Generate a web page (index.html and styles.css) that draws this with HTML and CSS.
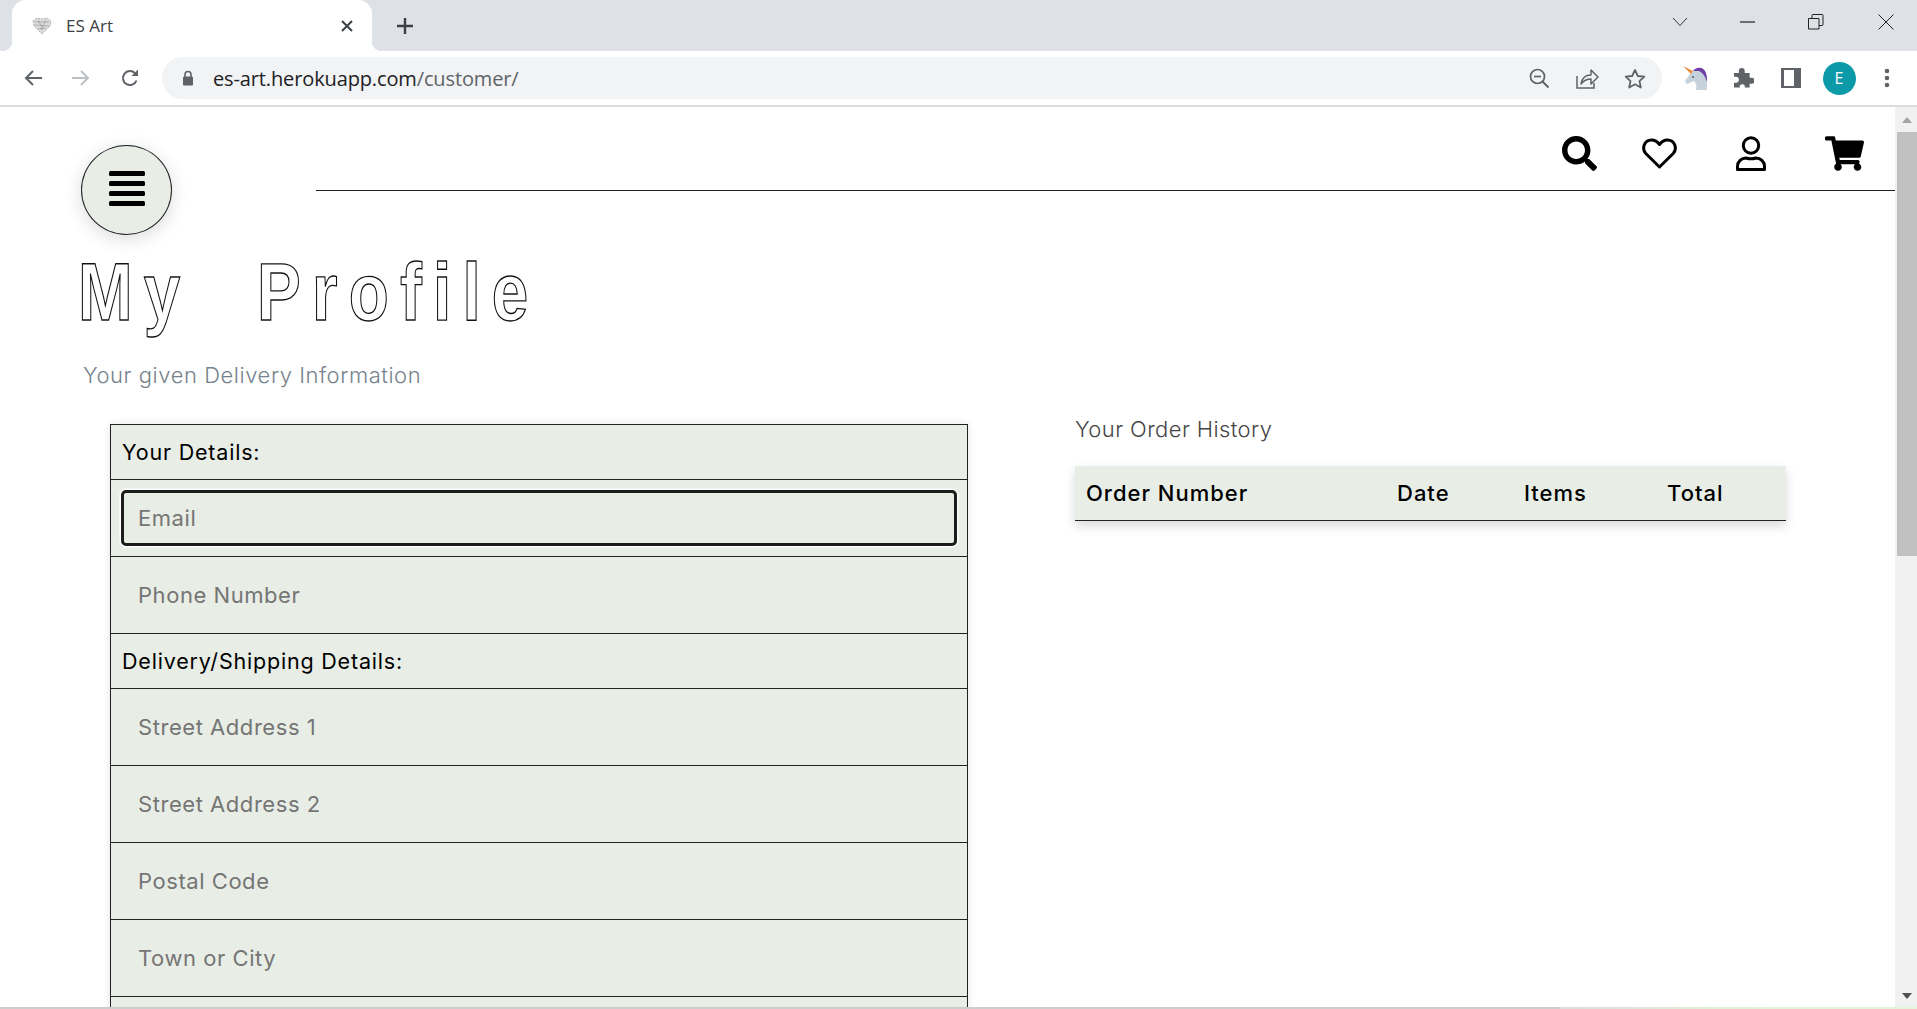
FILE: index.html
```html
<!DOCTYPE html>
<html lang="en">
<head>
    <meta charset="UTF-8">
    <meta name="viewport" content="width=device-width, initial-scale=1.0">
    <title>ES Art</title>
    <link rel="stylesheet" href="styles.css">
</head>
<body>

    <div class="tabstrip">
        <div class="tab">
            <svg class="favicon" width="20" height="18" viewBox="0 0 20 18"><path d="M1 4l4-3 5 1 5-1 4 3-1 5-8 8-8-8z" fill="#dcdcdc" stroke="#a5a5a5" stroke-width=".8" stroke-dasharray="2 1"/><path d="M3 5l14 0M3 8l14 1M6 12l8-1M6 3l5 9M14 3l-5 10" stroke="#999" stroke-width=".7" fill="none"/></svg>
            <span class="tab-title">ES Art</span>
            <svg class="tab-close" width="12" height="12" viewBox="0 0 12 12"><path d="M1 1l10 10M11 1L1 11" stroke="#3c4043" stroke-width="2"/></svg>
        </div>
        <svg class="new-tab" width="18" height="18" viewBox="0 0 18 18"><path d="M9 1v16M1 9h16" stroke="#3c4043" stroke-width="2.4"/></svg>
        <div class="window-controls">
            <svg width="16" height="10" viewBox="0 0 16 10"><path d="M1 1l7 7.500L15 1" stroke="#333" fill="none"/></svg>
            <svg width="16" height="2" viewBox="0 0 16 2"><path d="M0 1h15" stroke="#222" stroke-width="1.200"/></svg>
            <svg width="16" height="16" viewBox="0 0 16 16"><path d="M.5 4.500h10.500v10.500H.5zM4 4.500V1.500a1 1 0 0 1 1-1h9a1 1 0 0 1 1 1v9a1 1 0 0 1-1 1h-3" fill="none" stroke="#222"/></svg>
            <svg class="window-close" width="16" height="16" viewBox="0 0 16 16"><path d="M.5.500l15 15M15.500.500l-15 15" stroke="#222"/></svg>
        </div>
    </div>

    <div class="toolbar">
        <svg class="nav-icon" width="20" height="20" viewBox="0 0 20 20"><path d="M19 10H3M10 3l-7 7 7 7" fill="none" stroke="#5f6368" stroke-width="2"/></svg>
        <svg class="nav-icon" width="20" height="20" viewBox="0 0 20 20"><path d="M1 10h16M10 3l7 7-7 7" fill="none" stroke="#bdc1c6" stroke-width="2"/></svg>
        <svg class="nav-icon" width="20" height="20" viewBox="0 0 20 20"><path d="M16.500 12.500A7 7 0 1 1 15 5.200" fill="none" stroke="#5f6368" stroke-width="2"/><path d="M18 1.500V8h-6.500z" fill="#5f6368"/></svg>
        <div class="omnibox">
            <svg class="lock" width="12" height="16" viewBox="0 0 12 16"><path d="M3 7V4.500a3 3 0 0 1 6 0V7" fill="none" stroke="#5f6368" stroke-width="1.600"/><rect x="1" y="6.500" width="10" height="9" rx="1.200" fill="#5f6368"/></svg>
            <span class="url">es-art.herokuapp.com<span class="url-path">/customer/</span></span>
            <div class="omnibox-actions">
                <svg width="21" height="21" viewBox="0 0 21 21"><circle cx="8.500" cy="8.500" r="7" fill="none" stroke="#5f6368" stroke-width="1.700"/><path d="M13.500 13.500l6 6" stroke="#5f6368" stroke-width="2"/><path d="M5 8.500h7" stroke="#5f6368" stroke-width="1.700"/></svg>
                <svg width="23" height="21" viewBox="0 0 23 21"><path d="M1 8v12h17v-5" fill="none" stroke="#5f6368" stroke-width="1.500"/><path d="M5 16c1-6 5-9 10-9V2l7 7-7 7v-5c-4 0-7 1-10 5z" fill="none" stroke="#5f6368" stroke-width="1.500" stroke-linejoin="round"/></svg>
                <svg width="22" height="21" viewBox="0 0 22 21"><path d="M11 2l2.800 6 6.500.7-4.800 4.400 1.300 6.400L11 16.300 5.200 19.500l1.300-6.400L1.700 8.700 8.200 8z" fill="none" stroke="#5f6368" stroke-width="1.800" stroke-linejoin="round"/></svg>
            </div>
        </div>
        <div class="toolbar-actions">
            <svg width="26" height="26" viewBox="0 0 26 26"><path d="M9 8C12 4 20 3 23 8c2 4 2 12 2 17H14c1-4 0-7-2-9l-7 3-2-3z" fill="#c5d2dc"/><path d="M11 6c4-5 11-4 13 2 1 3 1 6 1 9-2-6-4-9-8-11z" fill="#6f3fa8"/><path d="M1 1l10 5-2 3z" fill="#ef8a3a"/><circle cx="11" cy="12" r="1" fill="#55606a"/></svg>
            <svg width="22" height="22" viewBox="0 0 22 22"><path d="M2 6h5V4a3 3 0 0 1 6 0v2h5v5h2a3 3 0 0 1 0 6h-2v4h-5v-2a3 3 0 0 0-5 0v2H2v-5h2a3 3 0 0 0 0-6H2z" fill="#5f6368" transform="scale(.98)"/></svg>
            <svg width="22" height="22" viewBox="0 0 22 22"><rect x="1" y="1" width="20" height="20" fill="#5f6368"/><rect x="4" y="3" width="10" height="16" fill="#fff"/></svg>
            <span class="avatar">E</span>
            <svg width="6" height="20" viewBox="0 0 6 20"><circle cx="3" cy="3" r="2.300" fill="#5f6368"/><circle cx="3" cy="10" r="2.300" fill="#5f6368"/><circle cx="3" cy="17" r="2.300" fill="#5f6368"/></svg>
        </div>
    </div>

    <div class="page">
        <div class="content">
            <header class="site-header">
                <button class="menu-btn" type="button">
                    <svg width="36" height="36" viewBox="0 0 36 36"><rect y="0" width="36" height="5" rx="1.500"/><rect y="10" width="36" height="5" rx="1.500"/><rect y="20" width="36" height="5" rx="1.500"/><rect y="30" width="36" height="5" rx="1.500"/></svg>
                </button>
                <div class="header-icons">
                    <svg class="icon-search" width="35" height="35" viewBox="0 0 512 512"><path d="M505 442.700L405.300 343c-4.500-4.500-10.600-7-17-7H372c27.600-35.300 44-79.700 44-128C416 93.100 322.900 0 208 0S0 93.100 0 208s93.100 208 208 208c48.300 0 92.700-16.400 128-44v16.300c0 6.400 2.500 12.500 7 17l99.700 99.700c9.400 9.400 24.600 9.400 33.900 0l28.300-28.300c9.400-9.400 9.400-24.600.1-34zM208 336c-70.700 0-128-57.200-128-128 0-70.700 57.200-128 128-128 70.700 0 128 57.200 128 128 0 70.700-57.200 128-128 128z"/></svg>
                    <svg class="icon-heart" width="35" height="31" viewBox="0 0 35 31"><path d="M17.500 29L3.800 15.500C-.5 11 2 2 9.500 2c3.500 0 6 1.800 8 4.500 2-2.700 4.500-4.500 8-4.500 7.500 0 10 9 5.700 13.500z" fill="none" stroke="#000" stroke-width="3" stroke-linejoin="round"/></svg>
                    <svg class="icon-user" width="30" height="35" viewBox="0 0 30 35"><circle cx="15" cy="9.500" r="7.700" fill="none" stroke="#000" stroke-width="3"/><path d="M1.500 33.500v-3c0-5 4-8.500 8.500-8.500 3 1 7 1 10 0 4.500 0 8.500 3.500 8.500 8.500v3z" fill="none" stroke="#000" stroke-width="3" stroke-linejoin="round"/></svg>
                    <svg class="icon-cart" width="39" height="35" viewBox="0 0 576 512"><path d="M528.120 301.319l47.273-208C578.806 78.301 567.391 64 551.990 64H159.208l-9.166-44.810C147.758 8.021 137.930 0 126.529 0H24C10.745 0 0 10.745 0 24v16c0 13.255 10.745 24 24 24h69.883l70.248 343.435C147.325 417.100 136 435.222 136 456c0 30.928 25.072 56 56 56s56-25.072 56-56c0-15.674-6.447-29.835-16.824-40h209.647C430.447 426.165 424 440.326 424 456c0 30.928 25.072 56 56 56s56-25.072 56-56c0-22.172-12.888-41.332-31.579-50.405l5.517-24.276c3.413-15.018-8.002-29.319-23.403-29.319H218.117l-6.545-32h293.145c11.206 0 20.920-7.754 23.403-18.681z"/></svg>
                </div>
            </header>

            <h1 class="page-title"><span class="title-word">My</span><span class="title-word">Profile</span></h1>
            <p class="intro">Your given Delivery Information</p>

            <div class="columns">
                <form class="details-form">
                    <div class="form-heading">Your Details:</div>
                    <div class="form-row"><input class="field field-focus" type="text" placeholder="Email"></div>
                    <div class="form-row"><input class="field" type="text" placeholder="Phone Number"></div>
                    <div class="form-heading">Delivery/Shipping Details:</div>
                    <div class="form-row"><input class="field" type="text" placeholder="Street Address 1"></div>
                    <div class="form-row"><input class="field" type="text" placeholder="Street Address 2"></div>
                    <div class="form-row"><input class="field" type="text" placeholder="Postal Code"></div>
                    <div class="form-row"><input class="field" type="text" placeholder="Town or City"></div>
                    <div class="form-row"><input class="field" type="text" placeholder="County"></div>
                </form>

                <section class="orders">
                    <p class="orders-title">Your Order History</p>
                    <table class="orders-table">
                        <thead>
                            <tr>
                                <th class="col-number">Order Number</th>
                                <th class="col-date">Date</th>
                                <th class="col-items">Items</th>
                                <th class="col-total">Total</th>
                            </tr>
                        </thead>
                    </table>
                </section>
            </div>
        </div>

        <div class="scrollbar">
            <span class="arrow-up"></span>
            <span class="thumb"></span>
            <span class="arrow-down"></span>
        </div>
    </div>

    <div class="window-edge"></div>

</body>
</html>
```

FILE: styles.css
```css
html, body {
    height: 100%;
}

body {
    margin: 0;
    display: flex;
    flex-direction: column;
    overflow: hidden;
    background-color: white;
    font-family: Inter, "Open Sans", sans-serif;
}

/* browser chrome */
.tabstrip {
    height: 51px;
    flex: none;
    display: flex;
    align-items: center;
    background-color: #dee1e6;
}

.tab {
    position: relative;
    width: 360px;
    height: 51px;
    margin-left: 12px;
    padding: 0 19px 0 20px;
    box-sizing: border-box;
    display: flex;
    align-items: center;
    background-color: white;
    border-radius: 14px 14px 0 0;
}

.tab::before,
.tab::after {
    content: "";
    position: absolute;
    bottom: 0;
    width: 10px;
    height: 10px;
}

.tab::before {
    left: -10px;
    background: radial-gradient(circle at 0 0, transparent 10px, white 10.500px);
}

.tab::after {
    right: -10px;
    background: radial-gradient(circle at 100% 0, transparent 10px, white 10.500px);
}

.favicon {
    flex: none;
}

.tab-title {
    margin-left: 14px;
    flex: 1;
    font-family: "Open Sans", sans-serif;
    font-size: 17px;
    color: #3c4043;
}

.new-tab {
    margin-left: 24px;
}

.window-controls {
    margin-left: auto;
    padding-right: 23px;
    padding-bottom: 8px;
    display: flex;
    align-items: center;
    gap: 52px;
}

.window-close {
    margin-left: 2px;
}

.toolbar {
    height: 56px;
    flex: none;
    padding-left: 23px;
    box-sizing: border-box;
    display: flex;
    align-items: center;
    background-color: white;
    border-bottom: 2px solid #dcdcdc;
}

.nav-icon {
    margin-right: 28px;
}

.nav-icon:nth-child(2) {
    margin-right: 29px;
}

.nav-icon:nth-child(3) {
    margin-right: 22px;
}

.omnibox {
    width: 1500px;
    height: 42px;
    flex: none;
    padding: 0 3px 0 20px;
    box-sizing: border-box;
    display: flex;
    align-items: center;
    background-color: #f1f3f4;
    border-radius: 21px;
}

.url {
    margin-left: 19px;
    flex: 1;
    font-family: "Open Sans", sans-serif;
    font-size: 20px;
    letter-spacing: -0.13px;
    color: #202124;
}

.url-path {
    color: #5f6368;
}

.omnibox-actions {
    display: grid;
    grid-template-columns: repeat(3, 48px);
    justify-items: center;
    align-items: center;
}

.toolbar-actions {
    margin-left: 9px;
    display: grid;
    grid-template-columns: repeat(5, 48px);
    justify-items: center;
    align-items: center;
}

.avatar {
    width: 33px;
    height: 33px;
    border-radius: 50%;
    background-color: #0d9aa8;
    color: white;
    font-family: "Open Sans", sans-serif;
    font-size: 16px;
    line-height: 33px;
    text-align: center;
}

/* page */
.page {
    flex: 1;
    min-height: 0;
    display: flex;
}

.content {
    flex: 1;
    min-width: 0;
    overflow: hidden;
}

.site-header {
    display: flex;
    align-items: flex-start;
    padding-left: 81px;
}

.menu-btn {
    width: 91px;
    height: 90px;
    margin-top: 38px;
    padding: 0 0 2px;
    flex: none;
    display: flex;
    align-items: center;
    justify-content: center;
    background-color: #e8ede6;
    border: 1px solid #222;
    border-radius: 50%;
    box-shadow: 0 4px 18px rgba(0, 0, 0, 0.14);
}

.header-icons {
    height: 84px;
    flex: 1;
    margin-left: 144px;
    padding-top: 29px;
    box-sizing: border-box;
    display: flex;
    align-items: flex-start;
    border-bottom: 1px solid #222;
}

.icon-search {
    margin-left: auto;
}

.icon-heart {
    margin: 2px 0 0 45px;
}

.icon-user {
    margin-left: 59px;
}

.icon-cart {
    margin: 0 31px 0 59px;
}

.page-title {
    margin: 21px 0 0 78px;
    height: 75px;
    display: flex;
    font-family: "Liberation Sans", sans-serif;
    font-size: 82px;
    font-weight: 700;
    line-height: 72px;
    color: white;
    -webkit-text-stroke: 1.300px #111;
}

.title-word {
    display: inline-block;
    width: 179px;
    transform: scaleX(0.8);
    transform-origin: left center;
    letter-spacing: 14px;
}

.intro {
    margin: 31px 0 0 83px;
    font-size: 22px;
    font-weight: 300;
    letter-spacing: 0.55px;
    color: #75828c;
}

.columns {
    display: flex;
    align-items: flex-start;
    margin-top: 36px;
    padding-left: 110px;
}

.details-form {
    width: 858px;
    flex: none;
    box-sizing: border-box;
    background-color: #e8ede6;
    border: 1px solid #222;
    box-shadow: 0 0 8px rgba(0, 0, 0, 0.1);
}

.form-heading {
    height: 55px;
    padding-left: 11px;
    box-sizing: border-box;
    display: flex;
    align-items: center;
    font-size: 21.500px;
    color: black;
    letter-spacing: 0.8px;
    border-bottom: 1px solid #222;
}

.form-row {
    height: 77px;
    padding: 10px;
    box-sizing: border-box;
    display: flex;
    align-items: center;
    border-bottom: 1px solid #222;
}

.field {
    width: 100%;
    height: 56px;
    padding: 0 17px;
    box-sizing: border-box;
    background-color: transparent;
    border: none;
    font-family: inherit;
    font-size: 22px;
    letter-spacing: 0.55px;
}

.field::placeholder {
    color: #757575;
    opacity: 1;
}

.field-focus {
    border: 3px solid #1c1c1c;
    border-radius: 5px;
    padding-left: 14px;
    box-shadow: 0 0 0 1.500px white;
}

.orders {
    width: 711px;
    margin: -8px 0 0 107px;
    flex: none;
}

.orders-title {
    margin: 0 0 24px;
    font-size: 22px;
    font-weight: 300;
    letter-spacing: 0.4px;
    color: #444;
}

.orders-table {
    width: 100%;
    table-layout: fixed;
    border-collapse: collapse;
    background-color: #e8ede6;
    border-bottom: 1px solid #222;
    box-shadow: 0 5px 10px rgba(0, 0, 0, 0.15);
}

.orders-table th {
    height: 54px;
    padding: 0;
    font-size: 22px;
    font-weight: 500;
    letter-spacing: 1px;
    text-align: left;
    color: black;
}

.orders-table .col-number {
    width: 311px;
    padding-left: 11px;
}

.col-date {
    width: 127px;
}

.col-items {
    width: 143px;
}

.scrollbar {
    width: 22px;
    padding-left: 2px;
    box-sizing: border-box;
    flex: none;
    display: flex;
    flex-direction: column;
    align-items: center;
    background-color: #f1f1f1;
}

.arrow-up,
.arrow-down {
    width: 0;
    height: 0;
    flex: none;
    border-left: 5.500px solid transparent;
    border-right: 5.500px solid transparent;
}

.arrow-up {
    margin: 10px 0 9px;
    border-bottom: 6px solid #a3a3a3;
}

.arrow-down {
    margin: auto 0 8px;
    border-top: 6px solid #505050;
}

.thumb {
    width: 100%;
    height: 424px;
    background-color: #c1c1c1;
}

.window-edge {
    height: 2px;
    flex: none;
    background: linear-gradient(to right, #cdcdcd 81.400%, #dcdcdc 81.400%, #dff2d8 90%, #e4f5dd 100%);
}
```
